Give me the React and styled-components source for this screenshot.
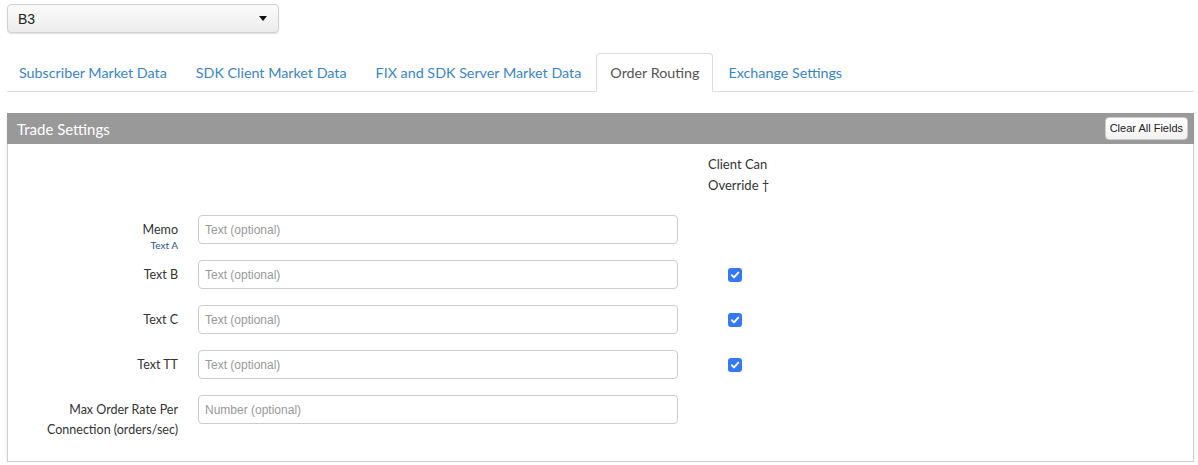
import React from 'react'
import styled, { createGlobalStyle } from 'styled-components'

const GlobalStyle = createGlobalStyle`
  body {
    margin: 0;
    background: #fff;
    font-family: Lato, "Open Sans", sans-serif;
    color: #333;
  }
`

const Page = styled.div`
  padding: 4px 4px 0 7px;
`

const Select = styled.div`
  width: 272px;
  height: 29px;
  box-sizing: border-box;
  border: 1px solid #d0d0d0;
  border-radius: 4px;
  background: linear-gradient(#fbfbfb, #ececec);
  box-shadow: 0 1px 1px rgba(0,0,0,0.12);
  display: flex;
  align-items: center;
  justify-content: space-between;
  padding: 0 11px 0 10px;
  font-family: "Liberation Sans", Arial, sans-serif;
  font-size: 14px;
  color: #222;
`

const Caret = styled.span`
  width: 0;
  height: 0;
  border-left: 4px solid transparent;
  border-right: 4px solid transparent;
  border-top: 5px solid #111;
`

const Tabs = styled.ul`
  list-style: none;
  margin: 20px 0 0;
  padding: 0;
  display: flex;
  border-bottom: 1px solid #ddd;
`

const Tab = styled.li`
  height: 37px;
  margin: 0 1px -1px 0;
  padding: 0 13px;
  display: flex;
  align-items: center;
  font-size: 14.3px;
  border: 1px solid ${p => (p.active ? '#ddd' : 'transparent')};
  border-bottom-color: ${p => (p.active ? '#fff' : 'transparent')};
  border-radius: 4px 4px 0 0;
  background: ${p => (p.active ? '#fff' : 'transparent')};
  color: ${p => (p.active ? '#555' : '#3a85c8')};
  &:first-child { margin-left: -2px; }
`

const Panel = styled.section`
  margin-top: 21px;
  border: 1px solid #cfcfcf;
  box-shadow: 0 2px 4px rgba(0,0,0,0.08);
`

const PanelHeader = styled.div`
  height: 31px;
  margin: -1px -1px 0;
  background: #999;
  display: flex;
  align-items: center;
  justify-content: space-between;
  padding: 0 6px 0 10px;
  color: #fff;
  font-size: 15px;
`

const ClearButton = styled.button`
  height: 23px;
  padding: 0 4px;
  margin-top: -1px;
  border: 1px solid #ccc;
  border-radius: 4px;
  background: linear-gradient(#fff, #f2f2f2);
  font-family: "Liberation Sans", Arial, sans-serif;
  font-size: 11px;
  color: #222;
`

const PanelBody = styled.div`
  padding: 10px 0 21px;
`

const Grid = styled.div`
  display: grid;
  grid-template-columns: 170px 480px 80px;
  column-gap: 20px;
  row-gap: 16px;
  & > :nth-child(3n) { margin-left: 10px; }
`

const HeaderCell = styled.div`
  font-size: 13px;
  line-height: 21px;
  margin-bottom: 3px;
`

const Label = styled.label`
  text-align: right;
  font-size: 12.5px;
  line-height: 20px;
  padding-top: 5px;
`

const SubLabel = styled.div`
  font-size: 10px;
  line-height: 10px;
  margin-bottom: -6px;
  color: #1d5a8c;
`

const Input = styled.input`
  height: 29px;
  box-sizing: border-box;
  border: 1px solid #ccc;
  border-radius: 4px;
  padding: 0 6px;
  font-family: "Liberation Sans", Arial, sans-serif;
  font-size: 12px;
  color: #333;
  &::placeholder { color: #999; }
`

const CheckCell = styled.div`
  display: flex;
  align-items: center;
  height: 29px;
  padding-left: 20px;
`

const Check = styled.span`
  width: 14px;
  height: 14px;
  border-radius: 3px;
  background: #3478f6;
  display: flex;
  align-items: center;
  justify-content: center;
`

const CheckBox = () => (
  <Check>
    <svg width="10" height="10" viewBox="0 0 10 10">
      <path d="M1.8 5.2 L4 7.4 L8.3 2.6" fill="none" stroke="#fff" strokeWidth="1.9" strokeLinecap="round" strokeLinejoin="round" />
    </svg>
  </Check>
)

const rows = [
  { label: 'Memo', sub: 'Text A', ph: 'Text (optional)', check: false },
  { label: 'Text B', ph: 'Text (optional)', check: true },
  { label: 'Text C', ph: 'Text (optional)', check: true },
  { label: 'Text TT', ph: 'Text (optional)', check: true },
  { label: ['Max Order Rate Per', 'Connection (orders/sec)'], ph: 'Number (optional)', check: false },
]

const tabs = ['Subscriber Market Data', 'SDK Client Market Data', 'FIX and SDK Server Market Data', 'Order Routing', 'Exchange Settings']

export default function App() {
  return (
    <Page>
      <GlobalStyle />
      <Select>B3<Caret /></Select>
      <Tabs>
        {tabs.map(t => <Tab key={t} active={t === 'Order Routing'}>{t}</Tab>)}
      </Tabs>
      <Panel>
        <PanelHeader>
          Trade Settings
          <ClearButton>Clear All Fields</ClearButton>
        </PanelHeader>
        <PanelBody>
          <Grid>
            <div />
            <div />
            <HeaderCell>Client Can<br />Override †</HeaderCell>
            {rows.map((r, i) => (
              <React.Fragment key={i}>
                <Label>
                  {Array.isArray(r.label) ? <>{r.label[0]}<br />{r.label[1]}</> : r.label}
                  {r.sub && <SubLabel>{r.sub}</SubLabel>}
                </Label>
                <Input placeholder={r.ph} />
                <CheckCell>{r.check && <CheckBox />}</CheckCell>
              </React.Fragment>
            ))}
          </Grid>
        </PanelBody>
      </Panel>
    </Page>
  )
}
